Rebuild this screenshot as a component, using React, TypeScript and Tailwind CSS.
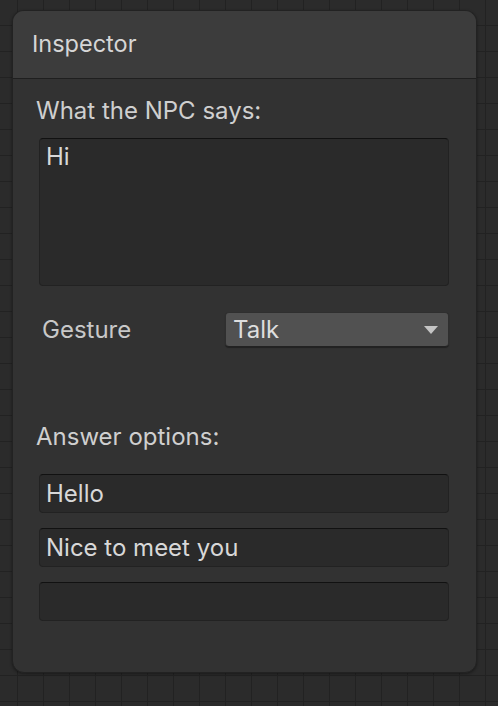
export default function App() {
  return (
    <div className="h-[706px] w-full overflow-hidden bg-[#2b2b2b] bg-[linear-gradient(to_right,#222222_1px,transparent_1px),linear-gradient(to_bottom,#222222_1px,transparent_1px)] bg-[size:26px_26px] bg-[position:17px_25px] pl-[12px] pt-[10px] font-['Inter','Noto_Sans',sans-serif] text-[#d2d2d2]">
      {/* Inspector panel */}
      <div className="flex h-[663px] w-[465px] flex-col overflow-hidden rounded-[12px] border border-[#222222] bg-[#323232] shadow-[0_1px_3px_rgba(0,0,0,0.4)]">
        {/* Header */}
        <div className="flex h-[68px] shrink-0 items-center border-b border-[#1f1f1f] bg-[#3c3c3c] pl-[19px] pb-[1px]">
          <span className="text-[23.5px] text-[#d6d6d6]">Inspector</span>
        </div>

        {/* Body */}
        <div className="flex flex-col pl-[26px] pr-[27px]">
          <div className="-ml-[3px] mt-[20px] h-[24px] text-[24px] leading-[24px] text-[#cfcfcf]">What the NPC says:</div>

          <div className="mt-[15px] h-[148px] rounded-[4px] border border-[#222222] border-t-[#111111] bg-[#2a2a2a] px-[6px] pt-[4px] text-[24px] leading-[28px] text-[#d8d8d8]">
            Hi
          </div>

          {/* Gesture */}
          <div className="mt-[26px] flex h-[35px] items-center">
            <span className="ml-[3px] w-[183px] text-[24px] text-[#c8c8c8]">Gesture</span>
            <div className="flex h-[35px] flex-1 items-center justify-between rounded-[4px] border border-[#2f2f2f] border-b-[#222222] bg-[#515151] pl-[7px] pr-[10px] shadow-[0_1px_1px_rgba(0,0,0,0.35)]">
              <span className="text-[24px] text-[#dedede]">Talk</span>
              <svg width="14" height="8" viewBox="0 0 14 8" className="mt-[1px]">
                <path d="M0 0H14L7 8Z" fill="#c4c4c4" />
              </svg>
            </div>
          </div>

          <div className="-ml-[3px] mt-[78px] h-[24px] text-[24px] leading-[24px] text-[#cfcfcf]">Answer options:</div>

          {/* Answer fields */}
          <div className="mt-[25px] flex flex-col gap-[15px]">
            {["Hello", "Nice to meet you", ""].map((answer, i) => (
              <div
                key={i}
                className="flex h-[39px] items-center rounded-[4px] border border-[#222222] border-t-[#111111] bg-[#2a2a2a] px-[6px] text-[24px] text-[#d8d8d8]"
              >
                {answer}
              </div>
            ))}
          </div>
        </div>
      </div>
    </div>
  );
}
